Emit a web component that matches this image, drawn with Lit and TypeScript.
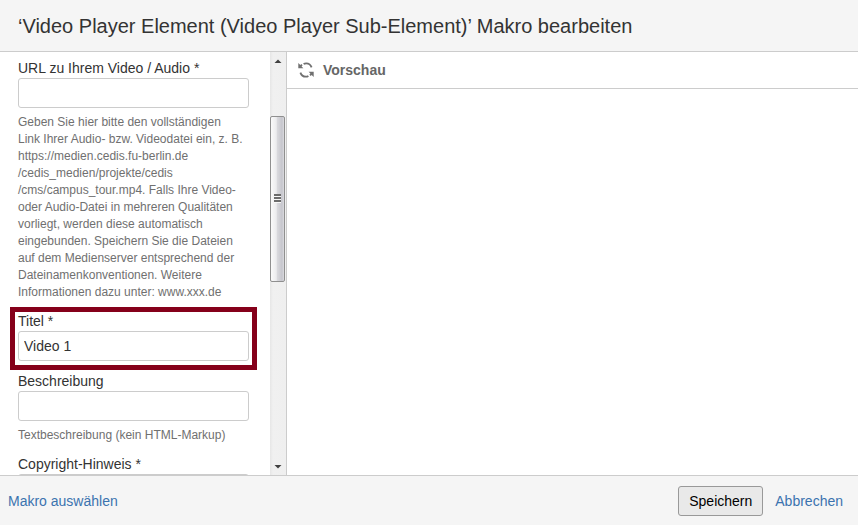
import { LitElement, html, css, svg } from "lit";
import { customElement, property } from "lit/decorators.js";

@customElement("scroll-rail")
class ScrollRail extends LitElement {
  static styles = css`
    :host {
      display: flex;
      flex-direction: column;
      align-items: flex-start;
      width: 16px;
      box-sizing: border-box;
      background: linear-gradient(to right, #e6e6e6, #f0f0f0 3px, #efefef);
    }
    .arrow {
      flex: none;
      display: block;
      width: 16px;
      height: 17px;
    }
    .before {
      flex: 47 0 0;
    }
    .thumb {
      flex: 165 0 0;
      display: flex;
      align-items: center;
      justify-content: center;
      width: 15px;
      box-sizing: border-box;
      border: 1px solid #8f8f8f;
      border-radius: 2px;
      background: linear-gradient(to right, #fafafa, #ececee 40%, #d8d8dc 50%, #c6c6cd 85%, #dcdce0);
    }
    .after {
      flex: 177 0 0;
    }
  `;

  render() {
    return html`
      <svg class="arrow" viewBox="0 0 16 17" aria-hidden="true">
        <path d="M8 7.5 L11.5 11 H4.5 Z" fill="#404040" />
      </svg>
      <div class="before"></div>
      <div class="thumb">
        <svg width="7" height="9" viewBox="0 0 7 9" aria-hidden="true">
          ${[0, 3, 6].map(
            (y) => svg`<rect x="0" y=${y} width="7" height="2" fill="#6c6c6c" /><rect x="0" y=${y + 2} width="7" height="1" fill="#f8f8f8" />`
          )}
        </svg>
      </div>
      <div class="after"></div>
      <svg class="arrow" viewBox="0 0 16 17" aria-hidden="true">
        <path d="M8 10.5 L4.5 7 H11.5 Z" fill="#404040" />
      </svg>
    `;
  }
}

@customElement("macro-field")
class MacroField extends LitElement {
  @property() label = "";
  @property() value = "";
  @property({ type: Boolean, reflect: true }) marked = false;
  @property({ attribute: false }) help: string[] = [];

  static styles = css`
    :host {
      display: block;
      position: relative;
    }
    :host([marked])::after {
      content: "";
      position: absolute;
      inset: -4px -8px -9px;
      border: 5px solid #85001a;
      pointer-events: none;
    }
    label {
      display: block;
      font-size: 14px;
      line-height: 20px;
      color: #333;
    }
    input {
      display: block;
      width: 100%;
      height: 30px;
      box-sizing: border-box;
      padding: 0 5px;
      border: 1px solid #ccc;
      border-radius: 3px;
      background: #fff;
      color: #333;
      font: inherit;
      font-size: 14px;
    }
    .help {
      margin: 0;
      padding-top: 6px;
      font-size: 12px;
      line-height: 17px;
      color: #707070;
      white-space: nowrap;
    }
  `;

  render() {
    return html`
      <label for="entry">${this.label}</label>
      <input id="entry" type="text" .value=${this.value} />
      ${this.help.length
        ? html`<p class="help">${this.help.map((line, i) => (i ? html`<br />${line}` : line))}</p>`
        : null}
    `;
  }
}

@customElement("app-root")
class AppRoot extends LitElement {
  static styles = css`
    :host {
      display: flex;
      flex-direction: column;
      height: 100vh;
      background: #fff;
      color: #333;
      font-family: "Liberation Sans", Arial, sans-serif;
      font-size: 14px;
      line-height: 20px;
    }
    header {
      flex: none;
      padding: 11px 18px 10px;
      border-bottom: 1px solid #ccc;
      background: #f5f5f5;
    }
    h1 {
      margin: 0;
      font-size: 20px;
      font-weight: 400;
      line-height: 30px;
    }
    main {
      flex: 1;
      display: flex;
      min-height: 0;
    }
    aside {
      flex: none;
      display: flex;
      border-right: 1px solid #ccc;
    }
    form {
      display: flex;
      flex-direction: column;
      gap: 10px;
      width: 270px;
      box-sizing: border-box;
      padding: 6px 21px 0 18px;
      overflow: hidden;
    }
    form > * {
      flex: none;
    }
    .preview {
      flex: 1;
    }
    .bar {
      display: flex;
      align-items: center;
      gap: 9px;
      height: 36px;
      padding-left: 11px;
      border-bottom: 1px solid #ccc;
    }
    .refresh {
      display: block;
      padding: 0;
      border: 0;
      background: none;
    }
    .refresh svg {
      display: block;
    }
    h2 {
      margin: 0;
      font-size: 14px;
      color: #666;
    }
    footer {
      flex: none;
      display: flex;
      align-items: center;
      gap: 12px;
      padding: 10px 15px 9px 8px;
      border-top: 1px solid #ccc;
      background: #f5f5f5;
    }
    a {
      color: #3b73af;
      text-decoration: none;
    }
    .select {
      margin-right: auto;
    }
    .save {
      height: 30px;
      padding: 0 10px;
      border: 1px solid #999;
      border-radius: 3px;
      background: #e9e9e9;
      color: #000;
      font: inherit;
    }
  `;

  private urlHelp = [
    "Geben Sie hier bitte den vollständigen",
    "Link Ihrer Audio- bzw. Videodatei ein, z. B.",
    "https://medien.cedis.fu-berlin.de",
    "/cedis_medien/projekte/cedis",
    "/cms/campus_tour.mp4. Falls Ihre Video-",
    "oder Audio-Datei in mehreren Qualitäten",
    "vorliegt, werden diese automatisch",
    "eingebunden. Speichern Sie die Dateien",
    "auf dem Medienserver entsprechend der",
    "Dateinamenkonventionen. Weitere",
    "Informationen dazu unter: www.xxx.de",
  ];

  render() {
    return html`
      <header><h1>‘Video Player Element (Video Player Sub-Element)’ Makro bearbeiten</h1></header>
      <main>
        <aside>
          <form>
            <macro-field label="URL zu Ihrem Video / Audio *" .help=${this.urlHelp}></macro-field>
            <macro-field label="Titel *" value="Video 1" marked></macro-field>
            <macro-field label="Beschreibung" .help=${["Textbeschreibung (kein HTML-Markup)"]}></macro-field>
            <macro-field label="Copyright-Hinweis *"></macro-field>
          </form>
          <scroll-rail></scroll-rail>
        </aside>
        <section class="preview">
          <div class="bar">
            <button class="refresh" type="button" aria-label="Vorschau aktualisieren">
              <svg width="16" height="16" viewBox="0 0 16 16" fill="none" stroke="#707070" stroke-width="1.8">
                <path d="M5.6 2 C6.4 1.5 7.3 1.3 8.2 1.3 C10.8 1.3 12.8 3 13.6 5.4" />
                <path d="M10.4 14 C9.6 14.5 8.7 14.7 7.8 14.7 C5.2 14.7 3.2 13 2.4 10.6" />
                <path d="M0.3 1 L2.3 3 L3.3 2 L4.6 3.3 L3.6 4.4 L5.4 6.3 H0.3 Z" fill="#707070" stroke="none" />
                <path d="M15.7 15 L13.7 13 L12.7 14 L11.4 12.7 L12.4 11.6 L10.6 9.7 H15.7 Z" fill="#707070" stroke="none" />
              </svg>
            </button>
            <h2>Vorschau</h2>
          </div>
        </section>
      </main>
      <footer>
        <a class="select" href="#">Makro auswählen</a>
        <button class="save" type="button">Speichern</button>
        <a href="#">Abbrechen</a>
      </footer>
    `;
  }
}
